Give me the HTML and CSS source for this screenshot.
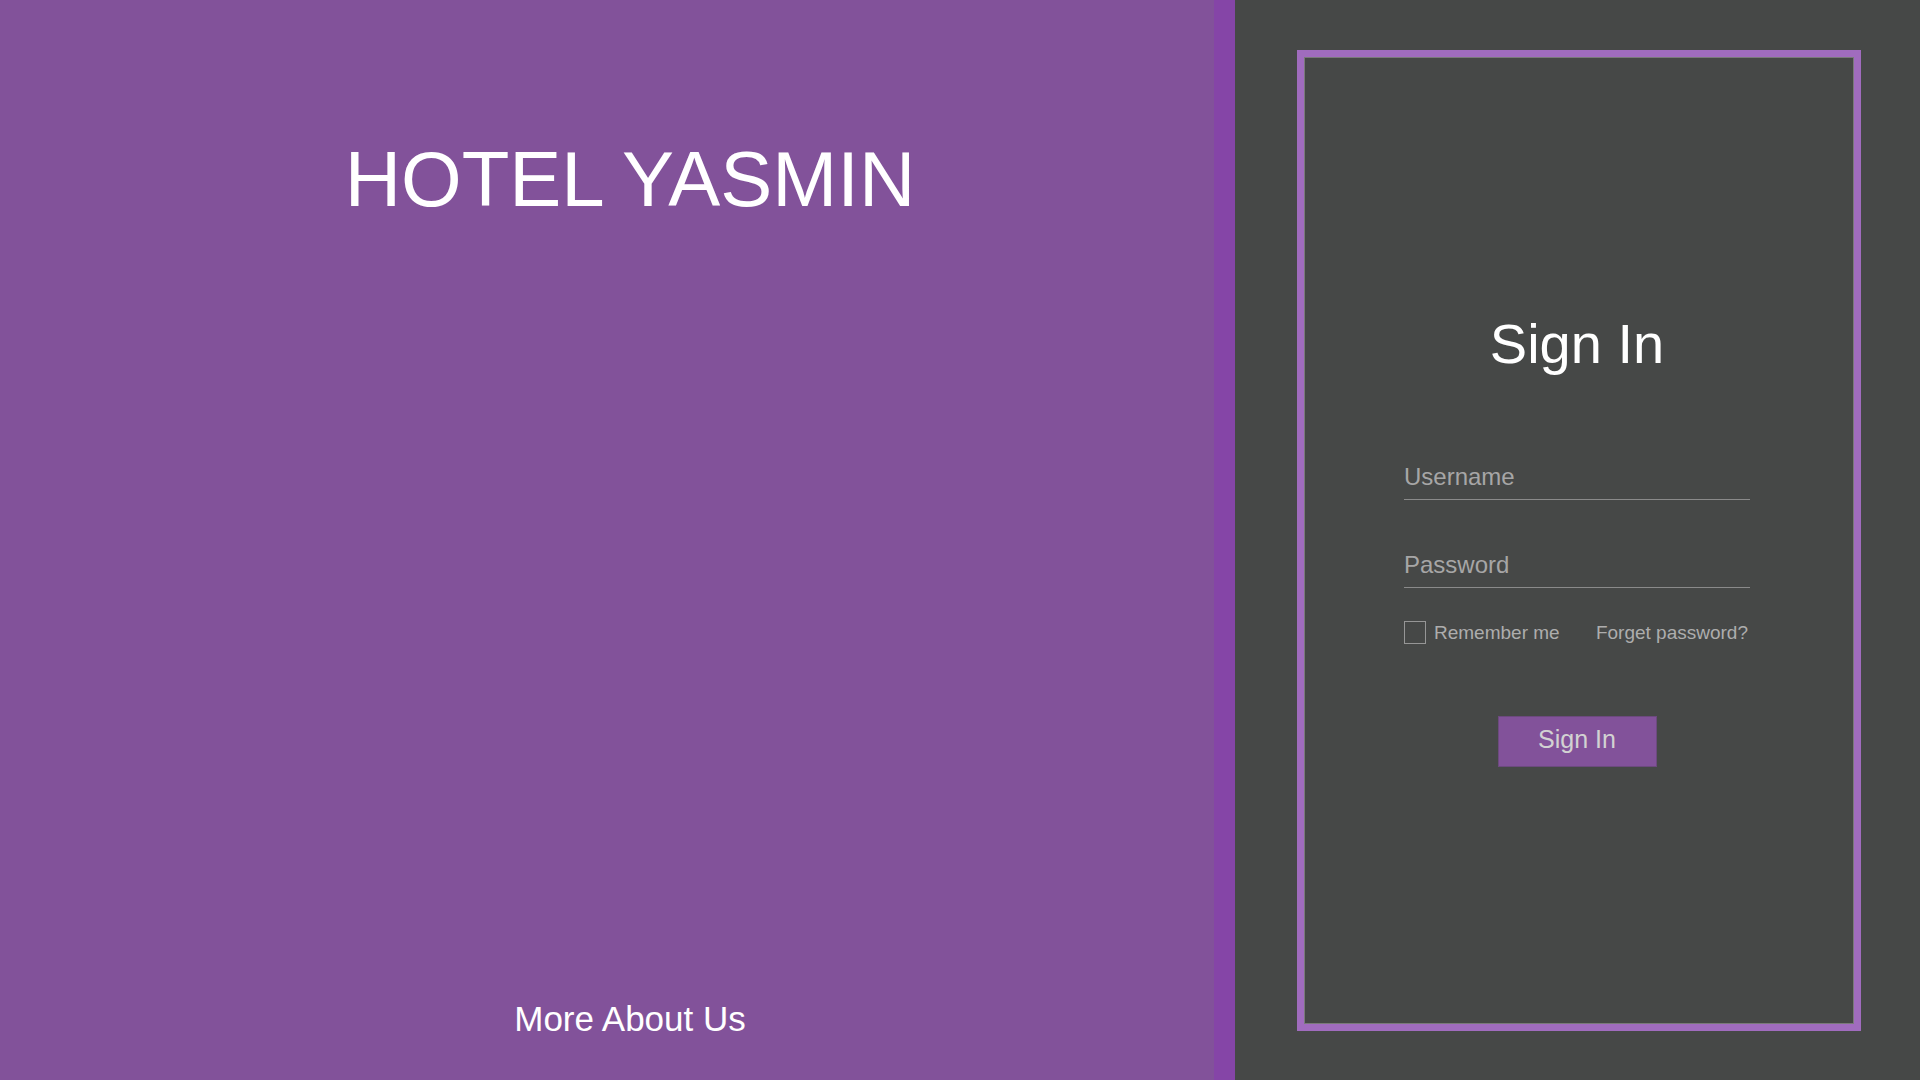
FILE: index.html
```html
<!DOCTYPE html>
<html lang="en">
<head>
<meta charset="utf-8">
<title>Hotel Yasmin</title>
<link rel="stylesheet" href="styles.css">
</head>
<body>
<div class="page">
  <section class="intro">
    <h1 class="brand">HOTEL YASMIN</h1>
    <a class="more" href="#">More About Us</a>
  </section>
  <div class="stripe"></div>
  <section class="auth">
    <form class="card">
      <h2 class="card-title">Sign In</h2>
      <input class="field field-user" type="text" placeholder="Username">
      <input class="field field-pass" type="password" placeholder="Password">
      <div class="options">
        <label class="remember"><span class="check"></span>Remember me</label>
        <a class="forgot" href="#">Forget password?</a>
      </div>
      <button class="submit" type="button">Sign In</button>
    </form>
  </section>
</div>
</body>
</html>
```
FILE: styles.css
```css
* { box-sizing: border-box; }
html, body { margin: 0; padding: 0; }
body {
  font-family: "Liberation Sans", Arial, sans-serif;
  background: #464847;
}
.page {
  display: flex;
  width: 1920px;
  height: 1080px;
}
.intro {
  width: 1214px;
  background: #82529a;
  display: flex;
  flex-direction: column;
  justify-content: space-between;
  padding: 140px 0 44px 46px;
}
.brand {
  margin: 0;
  text-align: center;
  font-weight: normal;
  font-size: 78px;
  line-height: 1;
  color: #ffffff;
}
.more {
  text-align: center;
  font-size: 35px;
  line-height: 1;
  color: #ffffff;
  text-decoration: none;
}
.stripe {
  width: 21px;
  background: #8545a7;
}
.auth {
  flex: 1;
  padding: 50px 59px 49px 62px;
}
.card {
  height: 100%;
  border: 7px solid #a06cbe;
  box-shadow: inset 0 0 0 1px #7a7a7a;
  display: flex;
  flex-direction: column;
  align-items: center;
  padding-top: 259px;
  padding-right: 4px;
}
.card-title {
  margin: 0 0 91px;
  font-weight: normal;
  font-size: 56px;
  line-height: 1;
  color: #ffffff;
}
.field {
  display: block;
  width: 346px;
  height: 37px;
  padding: 0 0 8px;
  border: 0;
  border-bottom: 1px solid #8a8a8a;
  background: transparent;
  font-family: "Liberation Sans", Arial, sans-serif;
  font-size: 24px;
  color: #dddddd;
  outline: none;
}
.field::placeholder { color: #a6a6a6; }
.field-user { margin-bottom: 51px; }
.field-pass { margin-bottom: 33px; }
.options {
  width: 346px;
  display: flex;
  justify-content: space-between;
  align-items: center;
  font-size: 19px;
  line-height: 22px;
  color: #adadad;
}
.remember {
  display: flex;
  align-items: center;
  gap: 8px;
}
.check {
  width: 22px;
  height: 23px;
  border: 1px solid #969696;
}
.forgot {
  color: #adadad;
  text-decoration: none;
  margin-right: 2px;
}
.submit {
  margin-top: 72px;
  width: 159px;
  height: 51px;
  background: #82529a;
  border: 1px solid #6c4a7e;
  color: #d2d2d2;
  font-family: "Liberation Sans", Arial, sans-serif;
  font-size: 25px;
  padding: 0 0 4px;
}
```
